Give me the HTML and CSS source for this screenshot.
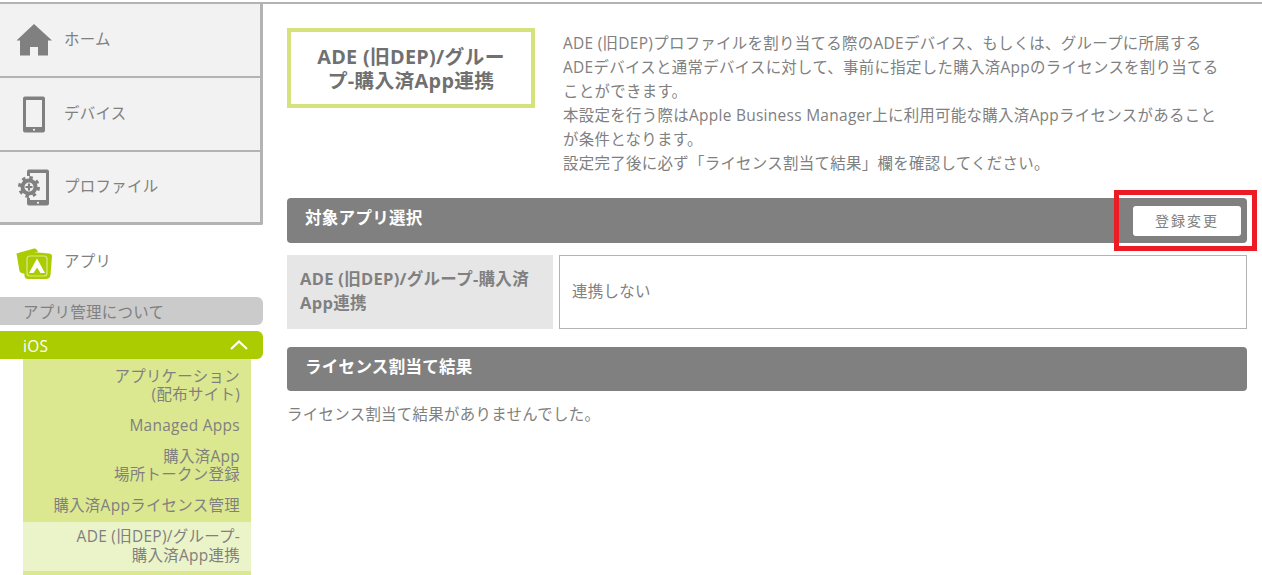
FILE: index.html
```html
<!DOCTYPE html>
<html lang="ja">
<head>
<meta charset="utf-8">
<title>ADE (旧DEP)/グループ-購入済App連携</title>
<link rel="stylesheet" href="styles.css">
</head>
<body>
<div class="page">
  <nav class="sidebar">
    <ul class="main-nav">
      <li class="main-item">
        <svg class="nav-icon" viewBox="0 0 36 36"><path d="M18 2 L36 18.500 L32 18.500 L32 33.500 L22 33.500 L22 25 L14 25 L14 33.500 L4 33.500 L4 18.500 L0.500 18.500 Z" fill="#808080"/></svg>
        <span>ホーム</span>
      </li>
      <li class="main-item">
        <svg class="nav-icon" viewBox="0 0 36 36"><path fill-rule="evenodd" d="M9 0.500 H27 Q29 0.500 29 2.500 V34.500 Q29 36.500 27 36.500 H9 Q7 36.500 7 34.500 V2.500 Q7 0.500 9 0.500 Z M10 4 V31 H26 V4 Z" fill="#808080"/><circle cx="18" cy="33.800" r="1" fill="#fff"/></svg>
        <span>デバイス</span>
      </li>
      <li class="main-item">
        <svg class="nav-icon" viewBox="0 0 36 36"><path fill-rule="evenodd" d="M13 0.500 H31 Q33 0.500 33 2.500 V34.500 Q33 36.500 31 36.500 H13 Q11 36.500 11 34.500 V29 H14 V31 H30 V4 H14 V7 H11 V2.500 Q11 0.500 13 0.500 Z" fill="#808080"/><circle cx="22" cy="33.800" r="1" fill="#fff"/><circle cx="13" cy="18" r="6.500" fill="none" stroke="#808080" stroke-width="4"/><circle cx="13" cy="18" r="9.500" fill="none" stroke="#808080" stroke-width="3" stroke-dasharray="3.500 3.960"/><path d="M13 14.500 V21.500 M9.500 18 H16.500" stroke="#808080" stroke-width="2.200"/></svg>
        <span>プロファイル</span>
      </li>
      <li class="main-item app-item">
        <svg class="nav-icon" viewBox="0 0 36 36"><path d="M0.500 9.500 L18 4.500 Q20 4 21 6 L22 8 L9 9 L9 30 L5.500 29 Q4 28.500 3.500 27 Z" fill="#aacc00"/><path d="M8 10 Q8 7.500 11 7.500 L33 9.500 Q36 10 36 12 L34.500 31 Q34 35 30 35 L12 35 Q9 35 8.500 32 Z" fill="#aacc00"/><rect x="11" y="12" width="20" height="20" rx="3" fill="#aacc00" stroke="#dce890" stroke-width="1.200"/><path d="M21 14.500 L29 29 L24.500 29 L21 23.500 L17.500 29 L13 29 Z" fill="#fff"/></svg>
        <span>アプリ</span>
      </li>
    </ul>
    <div class="sub-about">アプリ管理について</div>
    <div class="sub-ios">
      <span>iOS</span>
      <svg class="chevron" viewBox="0 0 18 10"><path d="M1 9 L9 1.500 L17 9" fill="none" stroke="#fff" stroke-width="2.200"/></svg>
    </div>
    <ul class="sub-list">
      <li>アプリケーション<br>(配布サイト)</li>
      <li>Managed Apps</li>
      <li>購入済App<br>場所トークン登録</li>
      <li>購入済Appライセンス管理</li>
      <li class="active">ADE (旧DEP)/グループ-<br>購入済App連携</li>
    </ul>
  </nav>
  <main class="content">
    <div class="intro">
      <h1 class="title-box">ADE (旧DEP)/グループ-購入済App連携</h1>
      <p class="description">ADE (旧DEP)プロファイルを割り当てる際のADEデバイス、もしくは、グループに所属するADEデバイスと通常デバイスに対して、事前に指定した購入済Appのライセンスを割り当てることができます。<br>本設定を行う際はApple Business Manager上に利用可能な購入済Appライセンスがあることが条件となります。<br>設定完了後に必ず「ライセンス割当て結果」欄を確認してください。</p>
    </div>
    <section class="bar bar-first">
      <h2>対象アプリ選択</h2>
      <button class="edit-btn" type="button">登録変更</button>
      <div class="highlight"></div>
    </section>
    <div class="form-row">
      <div class="form-label">ADE (旧DEP)/グループ-購入済App連携</div>
      <div class="form-value">連携しない</div>
    </div>
    <section class="bar bar-second">
      <h2>ライセンス割当て結果</h2>
    </section>
    <p class="result">ライセンス割当て結果がありませんでした。</p>
  </main>
</div>
</body>
</html>
```

FILE: styles.css
```css
* { box-sizing: border-box; }
html, body { margin: 0; padding: 0; height: 575px; overflow: hidden; background: #fff; }
body {
  padding-top: 2px;
  font-family: "Open Sans", "Noto Sans CJK JP", sans-serif;
  font-size: 15.450px;
  letter-spacing: 0.300px;
  color: #808080;
}
ul { list-style: none; margin: 0; padding: 0; }
.page { display: flex; border-top: 2px solid #b3b3b3; height: 571px; }
.sidebar { width: 263px; flex: none; }
.main-nav { display: flex; flex-direction: column; }
.main-item {
  display: flex;
  align-items: center;
  height: 74px;
  padding-left: 16px;
  gap: 12px;
  background: #f2f2f2;
  border-right: 3px solid #b3b3b3;
  border-bottom: 2px solid #b3b3b3;
  line-height: 1;
}
.main-item:nth-child(3) { height: 73px; border-bottom-width: 3px; border-bottom-right-radius: 2px; }
.main-item.app-item { background: #fff; border: 0; height: 72px; padding-top: 2px; }
.nav-icon { width: 36px; height: 36px; flex: none; overflow: visible; }
.sub-about {
  height: 28px;
  line-height: 25px;
  padding: 3px 0 0 23px;
  background: #cbcbcb;
  border-radius: 0 6px 6px 0;
}
.sub-ios {
  display: flex;
  align-items: center;
  justify-content: space-between;
  height: 28px;
  margin-top: 6px;
  padding: 2px 15px 0 23px;
  background: #aacc00;
  border-radius: 0 6px 6px 0;
  color: #fff;
}
.chevron { width: 18px; height: 10px; margin-top: -2px; }
.sub-list {
  margin: 0 12px 0 23px;
  background: #dce890;
  text-align: right;
  line-height: 18px;
  padding-top: 3px;
  padding-bottom: 5px;
}
.sub-list li { padding: 5px 11px 7px 0; }
.sub-list li + li { margin-top: 1px; }
.sub-list li.active { background: #ebf3c8; line-height: 19px; padding-top: 5px; padding-bottom: 6px; margin-top: 1px; }
.content { flex: 1; padding: 24px 15px 0 24px; min-width: 0; }
.intro { display: flex; gap: 28px; align-items: flex-start; }
.title-box {
  flex: none;
  width: 248px;
  height: 80px;
  margin: 0;
  padding: 2px 22px 0;
  display: flex;
  align-items: center;
  justify-content: center;
  text-align: center;
  border: 4px solid #d6e27c;
  font-size: 19.800px;
  font-weight: 700;
  line-height: 24px;
  color: #707070;
}
.description { margin: 3px 0 0; width: 660px; line-height: 24px; color: #808080; }
.bar {
  position: relative;
  display: flex;
  align-items: center;
  justify-content: space-between;
  background: #808080;
  border-radius: 4px;
  padding: 0 6px 0 18px;
}
.bar h2 { margin: 0; font-size: 16.500px; font-weight: 700; color: #fff; line-height: 24px; }
.bar-first { height: 45px; margin-top: 23px; }
.bar-first h2 { padding-bottom: 5px; }
.bar-second { height: 44px; margin-top: 18px; }
.bar-second h2 { padding-bottom: 4px; }
.edit-btn {
  width: 108px;
  height: 30px;
  border: 0;
  border-radius: 3px;
  background: #fff;
  color: #808080;
  font: inherit;
  font-size: 14px;
  letter-spacing: 2px;
  padding: 0 0 2px;
}
.highlight {
  position: absolute;
  left: 827px;
  top: -8px;
  width: 143px;
  height: 61px;
  border: 5px solid #ed1c24;
  pointer-events: none;
}
.form-row { display: flex; gap: 6px; margin-top: 12px; height: 74px; }
.form-label {
  width: 266px;
  flex: none;
  padding: 0 13px 3px;
  display: flex;
  align-items: center;
  background: #e6e6e6;
  font-size: 16.500px;
  font-weight: 700;
  line-height: 24px;
  color: #808080;
}
.form-value {
  flex: 1;
  display: flex;
  align-items: center;
  padding: 0 0 3px 12px;
  border: 1px solid #b3b3b3;
}
.result { margin: 11px 0 0; line-height: 24px; }
```
